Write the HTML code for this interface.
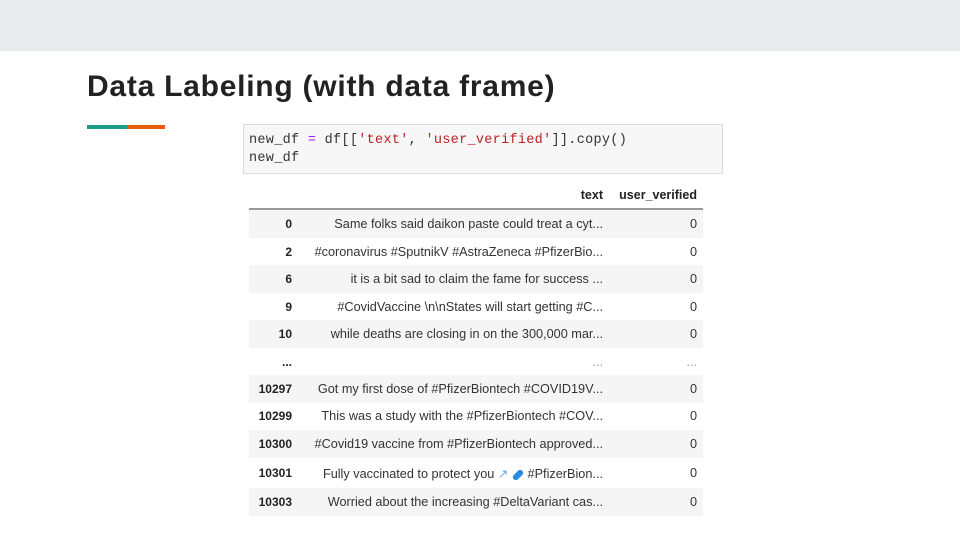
<!DOCTYPE html>
<html><head><meta charset="utf-8"><style>
body{margin:0;width:960px;height:540px;background:#fff;position:relative;overflow:hidden;font-family:"Liberation Sans",sans-serif}
.top{position:absolute;left:0;top:0;width:960px;height:51px;background:#e8eaeb}
h1{position:absolute;left:87px;top:70px;margin:0;font-size:30px;font-weight:bold;color:#222;white-space:nowrap;letter-spacing:0.75px}
.u1{position:absolute;left:87px;top:125px;width:40px;height:4px;background:#1a9a88}
.u2{position:absolute;left:127px;top:125px;width:38px;height:4px;background:#e85d0c}
.code{position:absolute;left:243px;top:124px;width:480px;height:50px;background:#f7f7f7;border:1px solid #dcdcdc;box-sizing:border-box;font-family:"Liberation Mono",monospace;font-size:13.5px;letter-spacing:0.3px;color:#333;padding:7px 0 0 5px;line-height:18px;white-space:pre}
.s{color:#ba2121}.o{color:#aa22ff}
.r{position:absolute;left:249px;width:454px;height:28px;font-size:12.7px;color:#333}
.r.g{background:#f5f5f5}
.r span{position:absolute;top:7px;white-space:nowrap}
.i{right:411px;font-weight:bold;color:#222;font-size:12px;top:7px!important}
.t{right:100px}
.v{right:6px}
.hd{position:absolute;left:249px;top:186px;width:454px;height:22px;border-bottom:2px solid #999;font-weight:bold;font-size:12.5px;color:#222}
.hd span{position:absolute;top:2px}
</style></head><body>
<div class="top"></div>
<h1>Data Labeling (with data frame)</h1>
<div class="u1"></div><div class="u2"></div>
<div class="code">new_df <span class="o">=</span> df[[<span class="s">'text'</span>, <span class="s">'user_verified'</span>]].copy()
new_df</div>
<div class="hd"><span style="right:100px">text</span><span style="right:6px">user_verified</span></div>
<div class="r g" style="top:210px"><span class="i">0</span><span class="t">Same folks said daikon paste could treat a cyt...</span><span class="v">0</span></div>
<div class="r" style="top:238px"><span class="i">2</span><span class="t">#coronavirus #SputnikV #AstraZeneca #PfizerBio...</span><span class="v">0</span></div>
<div class="r g" style="top:265px"><span class="i">6</span><span class="t">it is a bit sad to claim the fame for success ...</span><span class="v">0</span></div>
<div class="r" style="top:293px"><span class="i">9</span><span class="t">#CovidVaccine \n\nStates will start getting #C...</span><span class="v">0</span></div>
<div class="r g" style="top:320px"><span class="i">10</span><span class="t">while deaths are closing in on the 300,000 mar...</span><span class="v">0</span></div>
<div class="r" style="top:348px"><span class="i">...</span><span class="t" style="color:#999">...</span><span class="v" style="color:#999">...</span></div>
<div class="r g" style="top:375px"><span class="i">10297</span><span class="t">Got my first dose of #PfizerBiontech #COVID19V...</span><span class="v">0</span></div>
<div class="r" style="top:402px"><span class="i">10299</span><span class="t">This was a study with the #PfizerBiontech #COV...</span><span class="v">0</span></div>
<div class="r g" style="top:430px"><span class="i">10300</span><span class="t">#Covid19 vaccine from #PfizerBiontech approved...</span><span class="v">0</span></div>
<div class="r" style="top:459px"><span class="i">10301</span><span class="t">Fully vaccinated to protect you <span style="position:static;color:#6aa8e8">&#x2197;</span> <span style="position:static;display:inline-block;width:12px;height:6px;background:#2a8ae0;border-radius:3px;transform:rotate(-45deg)"></span> #PfizerBion...</span><span class="v">0</span></div>
<div class="r g" style="top:488px"><span class="i">10303</span><span class="t">Worried about the increasing #DeltaVariant cas...</span><span class="v">0</span></div>
</body></html>
